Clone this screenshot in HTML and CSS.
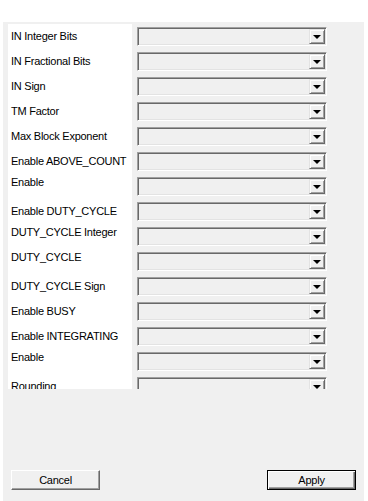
FILE: index.html
```html
<!DOCTYPE html>
<html lang="en">
<head>
    <meta charset="UTF-8">
    <meta name="viewport" content="width=device-width, initial-scale=1.0">
    <title>Settings</title>
    <link rel="stylesheet" href="styles.css">
</head>
<body>

    <div class="dialog">
        <div class="settings-scroll">
            <div class="settings-grid">
                <div class="row"><label>IN Integer Bits</label><div class="combo"><span class="drop"></span></div></div>
                <div class="row"><label>IN Fractional Bits</label><div class="combo"><span class="drop"></span></div></div>
                <div class="row"><label>IN Sign</label><div class="combo"><span class="drop"></span></div></div>
                <div class="row"><label>TM Factor</label><div class="combo"><span class="drop"></span></div></div>
                <div class="row"><label>Max Block Exponent</label><div class="combo"><span class="drop"></span></div></div>
                <div class="row"><label>Enable ABOVE_COUNT</label><div class="combo"><span class="drop"></span></div></div>
                <div class="row"><label class="wrapped">Enable</label><div class="combo"><span class="drop"></span></div></div>
                <div class="row"><label>Enable DUTY_CYCLE</label><div class="combo"><span class="drop"></span></div></div>
                <div class="row"><label class="wrapped">DUTY_CYCLE Integer</label><div class="combo"><span class="drop"></span></div></div>
                <div class="row"><label class="wrapped">DUTY_CYCLE</label><div class="combo"><span class="drop"></span></div></div>
                <div class="row"><label>DUTY_CYCLE Sign</label><div class="combo"><span class="drop"></span></div></div>
                <div class="row"><label>Enable BUSY</label><div class="combo"><span class="drop"></span></div></div>
                <div class="row"><label>Enable INTEGRATING</label><div class="combo"><span class="drop"></span></div></div>
                <div class="row"><label class="wrapped">Enable</label><div class="combo"><span class="drop"></span></div></div>
                <div class="row"><label>Rounding</label><div class="combo"><span class="drop"></span></div></div>
            </div>
        </div>

        <div class="button-bar">
            <button class="btn">Cancel</button>
            <button class="btn default">Apply</button>
        </div>
    </div>

</body>
</html>
```

FILE: styles.css
```css
body {
    margin: 0;
    background-color: #ffffff;
    font-family: 'Liberation Sans', Arial, sans-serif;
    font-size: 11px;
    letter-spacing: -0.25px;
    color: #000;
}

.dialog {
    margin: 22px 0 0 3px;
    width: 361px;
    height: 479px;
    background-color: #f0f0f0;
    display: flex;
    flex-direction: column;
}

.settings-scroll {
    margin: 2px 0 0 5px;
    height: 365px;
    overflow: hidden;
    /* label column is white, combo column sits on the dialog grey */
    background: linear-gradient(to right, #ffffff 124px, transparent 124px);
}

.settings-grid {
    padding-top: 3px;
}

.row {
    display: flex;
    height: 25px;
}

.row label {
    width: 121px;
    padding-left: 3px;
    height: 19px;
    line-height: 19px;
    white-space: nowrap;
    overflow: hidden;
}

.row label.wrapped {
    line-height: 10px;
}

.combo {
    position: relative;
    margin-left: 5px;
    width: 190px;
    height: 19px;
    box-sizing: border-box;
    background-color: #f0f0f0;
    border-top: 1px solid #a0a0a0;
    border-left: 1px solid #a0a0a0;
    border-bottom: 1px solid #ffffff;
    border-right: 1px solid #ffffff;
    box-shadow: inset 1px 1px 0 #696969, inset -1px -1px 0 #e3e3e3;
}

.drop {
    position: absolute;
    right: 1px;
    top: 1px;
    width: 16px;
    height: 15px;
    box-sizing: border-box;
    background-color: #f0f0f0;
    border-top: 1px solid #e3e3e3;
    border-left: 1px solid #e3e3e3;
    border-bottom: 1px solid #696969;
    border-right: 1px solid #696969;
    box-shadow: inset 1px 1px 0 #ffffff, inset -1px -1px 0 #a0a0a0;
}

.drop::after {
    content: "";
    position: absolute;
    left: 3px;
    top: 5px;
    border-left: 4px solid transparent;
    border-right: 4px solid transparent;
    border-top: 4px solid #000;
}

.button-bar {
    margin-top: auto;
    margin-bottom: 11px;
    padding: 0 8px;
    display: flex;
    justify-content: space-between;
}

.btn {
    width: 89px;
    height: 20px;
    padding: 0;
    font-family: inherit;
    font-size: 11px;
    letter-spacing: -0.25px;
    color: #000;
    background-color: #f0f0f0;
    border-top: 1px solid #ffffff;
    border-left: 1px solid #ffffff;
    border-bottom: 1px solid #696969;
    border-right: 1px solid #696969;
    box-shadow: inset -1px -1px 0 #a0a0a0;
    border-radius: 0;
}

.btn.default {
    border: 1px solid #000;
    box-shadow: inset 1px 1px 0 #ffffff, inset -1px -1px 0 #696969, inset -2px -2px 0 #a0a0a0;
}
```
